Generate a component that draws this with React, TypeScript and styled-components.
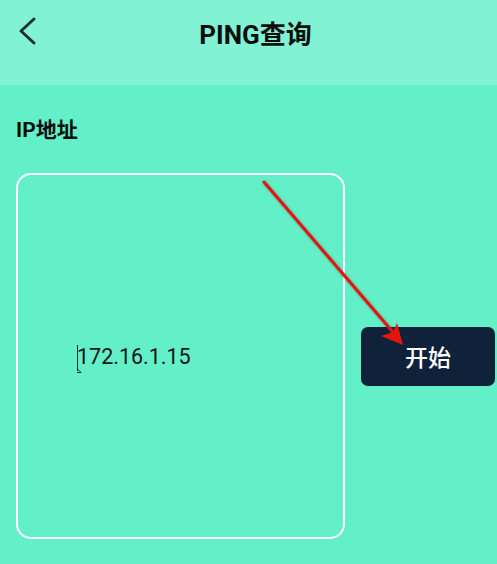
import styled, { createGlobalStyle } from 'styled-components'

const GlobalStyle = createGlobalStyle`
    html, body {
        margin: 0;
        padding: 0;
        background: #63efc8;
        font-family: Roboto, "Noto Sans CJK SC", sans-serif;
    }
`

const Page = styled.div`
    position: relative;
    width: 497px;
    height: 564px;
    overflow: hidden;
    background: #63efc8;
`

const Header = styled.header`
    height: 85px;
    background: #82f2d4;
`

const Bar = styled.div`
    position: relative;
    height: 64px;
    display: flex;
    align-items: center;
    justify-content: center;
    padding-left: 14px;
`

const BackButton = styled.button`
    position: absolute;
    left: 13px;
    top: 14px;
    width: 30px;
    height: 34px;
    padding: 0;
    border: none;
    background: none;
    display: flex;
    align-items: center;
    justify-content: center;
`

const Title = styled.h1`
    margin: 0;
    font-size: 26px;
    font-weight: 700;
    color: #0a0f0e;
`

const Content = styled.main`
    padding: 33px 2px 0 16px;
`

const Label = styled.div`
    font-size: 21px;
    line-height: 24px;
    font-weight: 700;
    color: #0a0f0e;
`

const Row = styled.div`
    margin-top: 31px;
    display: flex;
    align-items: center;
    gap: 16px;
`

const InputBox = styled.div`
    box-sizing: border-box;
    width: 329px;
    height: 366px;
    border: 2.5px solid #ffffff;
    border-radius: 15px;
    display: flex;
    align-items: center;
    padding-left: 58px;
    font-size: 21.5px;
    color: #101513;
`

const Caret = styled.svg`
    display: block;
    margin-top: 6px;
    margin-right: -5px;
`

const StartButton = styled.button`
    width: 134px;
    height: 59px;
    border: none;
    border-radius: 7px;
    background: #10223a;
    color: #ffffff;
    font-family: Roboto, "Noto Sans CJK SC", sans-serif;
    font-size: 23px;
    font-weight: 500;
`

const Overlay = styled.svg`
    position: absolute;
    left: 0;
    top: 0;
    pointer-events: none;
`

const App = () => {
    return (
        <>
            <GlobalStyle />
            <Page>
                <Header>
                    <Bar>
                        <BackButton aria-label="back">
                            <svg width="30" height="34" viewBox="0 0 30 34">
                                <path
                                    d="M21 5 L8 17 L21 29"
                                    fill="none"
                                    stroke="#1d302c"
                                    strokeWidth="3"
                                    strokeLinecap="round"
                                    strokeLinejoin="round"
                                />
                            </svg>
                        </BackButton>
                        <Title>PING查询</Title>
                    </Bar>
                </Header>
                <Content>
                    <Label>IP地址</Label>
                    <Row>
                        <InputBox>
                            <Caret width="6" height="30" viewBox="0 0 6 30">
                                <path d="M1.5 1 V27" stroke="#1c2a26" strokeWidth="1" />
                                <path d="M1.5 25 L5 28.5 H1" fill="none" stroke="#1c2a26" strokeWidth="1" />
                            </Caret>
                            <span>172.16.1.15</span>
                        </InputBox>
                        <StartButton>开始</StartButton>
                    </Row>
                </Content>
                <Overlay width="497" height="564" viewBox="0 0 497 564">
                    <defs>
                        <filter id="glow" x="-10%" y="-10%" width="120%" height="120%">
                            <feGaussianBlur stdDeviation="0.8" />
                        </filter>
                    </defs>
                    <g filter="url(#glow)" opacity="0.35">
                        <path d="M264 182 L398 338" stroke="#6a2a20" strokeWidth="4" />
                    </g>
                    <path d="M264 182 L398 338" stroke="#e4150f" strokeWidth="3" strokeLinecap="round" />
                    <path d="M403 345 L381 336 L393 332 L397 323 Z" fill="#e4150f" />
                </Overlay>
            </Page>
        </>
    )
}

export default App
